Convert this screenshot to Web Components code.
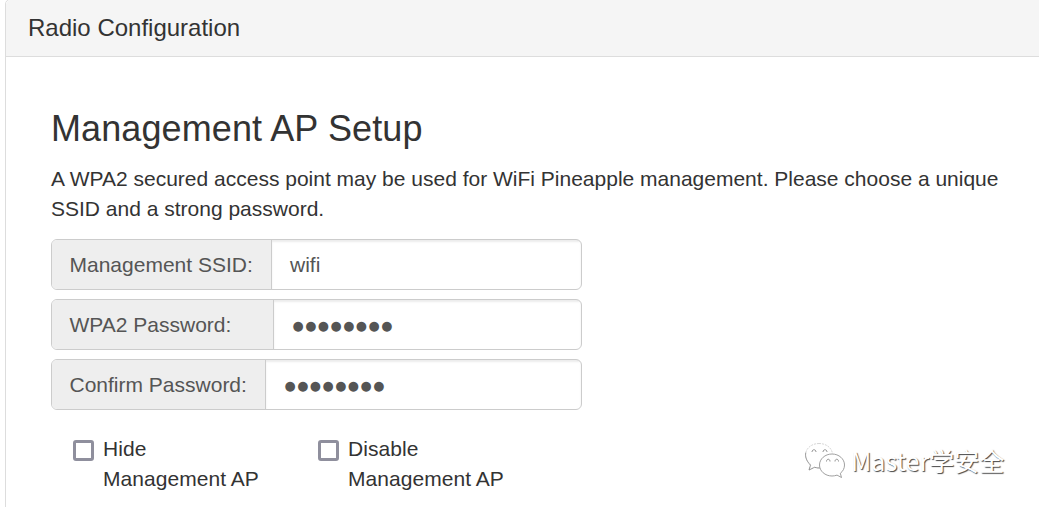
<!DOCTYPE html>
<html lang="en">
<head>
<meta charset="utf-8">
<title>Radio Configuration</title>
<style>
html, body {
    margin: 0;
    height: 507px;
    overflow: hidden;
    background: #fff;
}
body {
    position: relative;
    font: 21px/30px "Liberation Sans", Arial, sans-serif;
    color: #333;
}
</style>
</head>
<body>
<config-panel>
    <span slot="title">Radio Configuration</span>
    <panel-section heading="Management AP Setup">
        <span slot="intro">A WPA2 secured access point may be used for WiFi Pineapple management. Please choose a unique SSID and a strong password.</span>
        <input-group label="Management SSID:" style="--addon: 220px">wifi</input-group>
        <input-group label="WPA2 Password:" style="--addon: 222px" masked>●●●●●●●●</input-group>
        <input-group label="Confirm Password:" style="--addon: 214px" masked>●●●●●●●●</input-group>
        <check-option slot="options">Hide Management AP</check-option>
        <check-option slot="options">Disable Management AP</check-option>
    </panel-section>
</config-panel>
<account-mark>Master学安全</account-mark>

<script>
class BaseElement extends HTMLElement {

    constructor() {
        super();
        this.attachShadow({ mode: 'open' });
        const template = document.createElement('template');
        template.innerHTML = this.constructor.markup;
        this.shadowRoot.append(template.content.cloneNode(true));
    }

}

class ConfigPanel extends BaseElement {

    static markup = `
<style>
:host {
    display: block;
    box-sizing: border-box;
    height: 520px;
    margin: -1px -10px 0 5px;
    border: 1px solid #ddd;
    border-radius: 5px;
}
header {
    padding: 13px 22px 14px;
    background: #f5f5f5;
    border-bottom: 1px solid #ddd;
    border-radius: 5px 5px 0 0;
    font-size: 24px;
    line-height: 29px;
}
.body {
    padding: 52px 45px 0;
}
</style>
<header><slot name="title"></slot></header>
<div class="body"><slot></slot></div>
`;

}

class PanelSection extends BaseElement {

    static markup = `
<style>
:host {
    display: block;
}
h2 {
    margin: 0 0 15px;
    font-size: 36px;
    font-weight: 400;
    line-height: 40px;
    letter-spacing: .1px;
}
p {
    width: 960px;
    margin: 0 0 15px;
}
.fields {
    display: flex;
    flex-direction: column;
    gap: 9px;
    width: 531px;
}
.options {
    display: flex;
    margin: 24px 0 0 22px;
}
</style>
<h2></h2>
<p><slot name="intro"></slot></p>
<div class="fields"><slot></slot></div>
<div class="options"><slot name="options"></slot></div>
`;

    connectedCallback() {
        this.shadowRoot.querySelector('h2').textContent = this.getAttribute('heading');
    }

}

class InputGroup extends BaseElement {

    static markup = `
<style>
:host {
    display: flex;
    box-sizing: border-box;
    height: 51px;
    border: 1px solid #ccc;
    border-radius: 6px;
    overflow: hidden;
    color: #555;
    line-height: 49px;
}
.addon {
    box-sizing: border-box;
    flex: 0 0 var(--addon);
    padding-left: 17.5px;
    background: #eee;
    border-right: 1px solid #ccc;
    white-space: nowrap;
}
.field {
    flex: 1;
    padding-left: 18px;
    box-shadow: inset 0 2px 2px rgba(0, 0, 0, .075);
}
:host([masked]) .field {
    padding-left: 18.5px;
    font-family: "DejaVu Sans", sans-serif;
    font-size: 12.8px;
    line-height: 51px;
    letter-spacing: 1.5px;
}
</style>
<div class="addon"></div>
<div class="field"><slot></slot></div>
`;

    connectedCallback() {
        this.shadowRoot.querySelector('.addon').textContent = this.getAttribute('label');
    }

}

class CheckOption extends BaseElement {

    static markup = `
<style>
:host {
    display: flex;
    width: 245px;
}
.box {
    box-sizing: border-box;
    flex: none;
    width: 21px;
    height: 21px;
    margin: 6px 9px 0 0;
    border: 3px solid #8f8f9d;
    border-radius: 3px;
}
.label {
    width: 170px;
    letter-spacing: .05px;
}
</style>
<span class="box"></span>
<span class="label"><slot></slot></span>
`;

}

class AccountMark extends BaseElement {

    static markup = `
<style>
:host {
    position: absolute;
    left: 804px;
    top: 442px;
    display: flex;
    align-items: center;
    gap: 5px;
    color: #fff;
    font: 25px/36px "Noto Sans CJK SC", sans-serif;
    white-space: nowrap;
    text-shadow: 1px 1px 1px #444;
}
svg {
    display: block;
    fill: #fff;
    stroke: #888;
    stroke-width: .8;
}
.faint {
    stroke: #ccc;
    stroke-dasharray: 2 1;
}
.eye {
    fill: none;
    stroke: #777;
}
</style>
<svg width="42" height="36" viewBox="0 0 42 36">
    <path class="faint" d="M15 1.500C7.500 1.500 1.500 6.500 1.500 13c0 4 2 7 5 9.200L5 28l5.500-2.700c2 .6 4 .8 6 .7M15 1.500c7 0 12.500 4 13.500 10"/>
    <path d="M1.800 10.500C.8 15 3 19.500 6.500 23.200L5 28l5.500-2.700c2 .6 4 .8 6 .7" fill="none"/>
    <path class="eye" d="M8 10c0-3 4-3 4 0M19 10c0-3 4-3 4 0"/>
    <path d="M28 12c-7 0-12.500 5-12.500 11S21 34 28 34c1.800 0 3.500-.3 5-.9l4.500 2.400-1.200-4.200c2.700-2 4.200-5 4.200-8.300 0-6-5.500-11-12.500-11z"/>
    <path class="eye" d="M22.500 19.500c0-3 3.500-3 3.500 0M31 19.500c0-3 3.500-3 3.500 0"/>
</svg>
<span><slot></slot></span>
`;

}

customElements.define('config-panel', ConfigPanel);
customElements.define('panel-section', PanelSection);
customElements.define('input-group', InputGroup);
customElements.define('check-option', CheckOption);
customElements.define('account-mark', AccountMark);
</script>
</body>
</html>
